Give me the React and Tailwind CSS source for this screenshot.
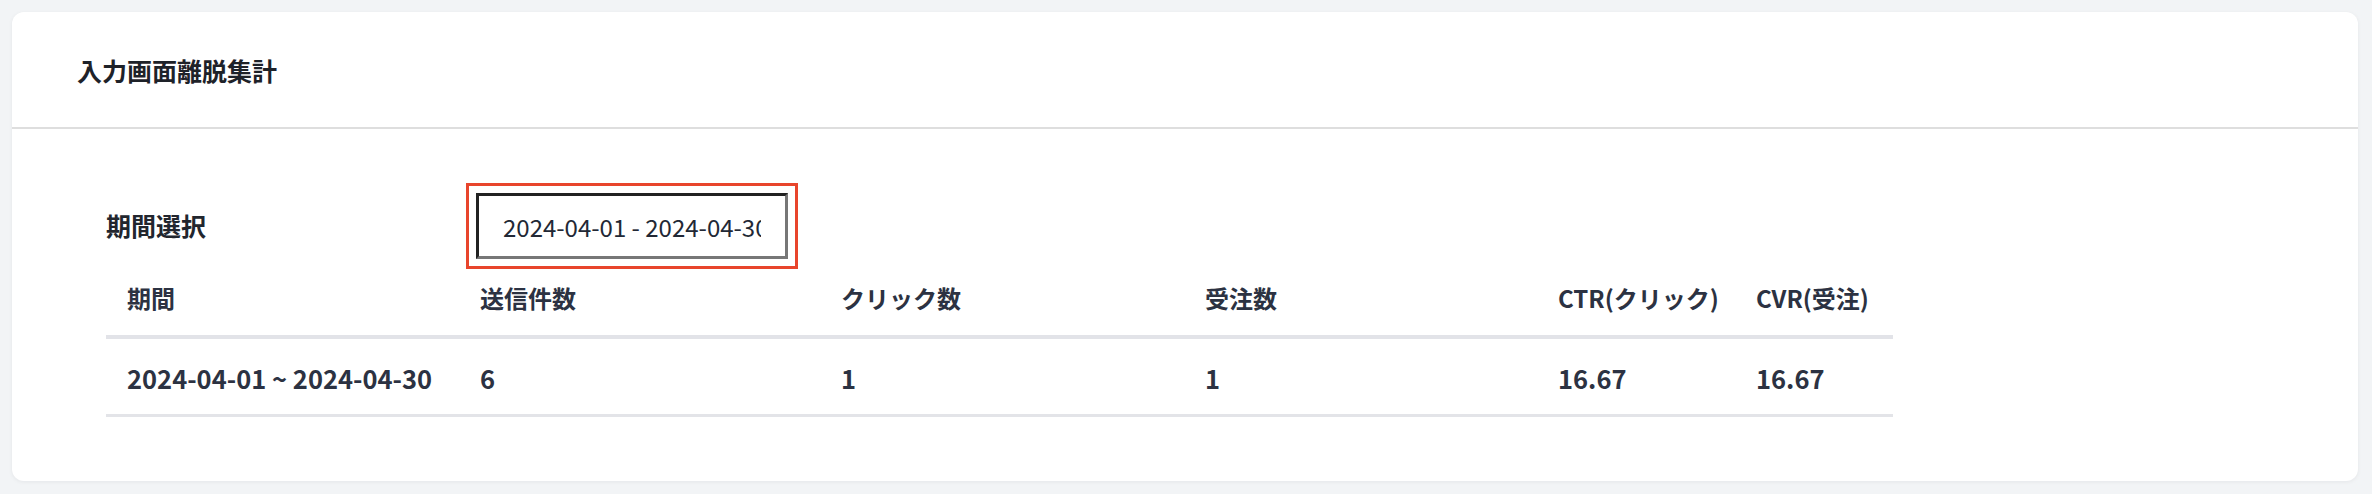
import React from "react";

const font = { fontFamily: '"Noto Sans CJK JP", "Noto Sans", sans-serif' };

const cols = [
  { label: "期間", w: "w-[353px]" },
  { label: "送信件数", w: "w-[361px]" },
  { label: "クリック数", w: "w-[364px]" },
  { label: "受注数", w: "w-[353px]" },
  { label: "CTR(クリック)", w: "w-[198px]" },
  { label: "CVR(受注)", w: "w-[158px]" },
];

const row = ["2024-04-01 ~ 2024-04-30", "6", "1", "1", "16.67", "16.67"];

export default function App() {
  return (
    <div
      className="w-[2372px] h-[494px] bg-[#f2f4f6] pt-[12px] pl-[12px]"
      style={font}
    >
      <div className="w-[2346px] h-[469px] bg-white rounded-[12px] shadow-[0_1px_4px_rgba(15,23,42,0.06)] flex flex-col overflow-hidden">
        <div className="h-[115px] flex items-center pl-[65px] pt-[2px] shrink-0">
          <h1 className="text-[25px] font-bold text-[#1e2229] leading-none">
            入力画面離脱集計
          </h1>
        </div>
        <div className="h-[2px] bg-[#dedede] shrink-0" />
        <div className="pt-[64px] pl-[94px]">
          <div className="flex items-center h-[66px]">
            <div className="w-[370px] text-[25px] font-bold text-[#22262e]">
              期間選択
            </div>
            <input
              readOnly
              value="2024-04-01 - 2024-04-30"
              className="w-[312px] h-[66px] border-[3px] border-solid border-t-[#222222] border-l-[#222222] border-b-[#777777] border-r-[#777777] px-[24px] text-[24px] text-[#222835] bg-white outline-[3px] outline-solid outline-[#e8452c] outline-offset-[7px]"
              style={font}
            />
          </div>
          <table className="border-separate border-spacing-0 font-bold text-[#2c3242]">
            <thead>
              <tr>
                {cols.map((c) => (
                  <th
                    key={c.label}
                    className={`${c.w} h-[80px] pl-[21px] text-left text-[24px] font-bold align-middle pt-[2px] border-b-[4px] border-solid border-[#e2e3e8]`}
                  >
                    {c.label}
                  </th>
                ))}
              </tr>
            </thead>
            <tbody>
              <tr>
                {row.map((v, i) => (
                  <td
                    key={i}
                    className="h-[78px] pl-[21px] text-left text-[25.5px] align-middle pt-[4px] border-b-[3px] border-solid border-[#e3e4e8]"
                  >
                    {v}
                  </td>
                ))}
              </tr>
            </tbody>
          </table>
        </div>
      </div>
    </div>
  );
}
